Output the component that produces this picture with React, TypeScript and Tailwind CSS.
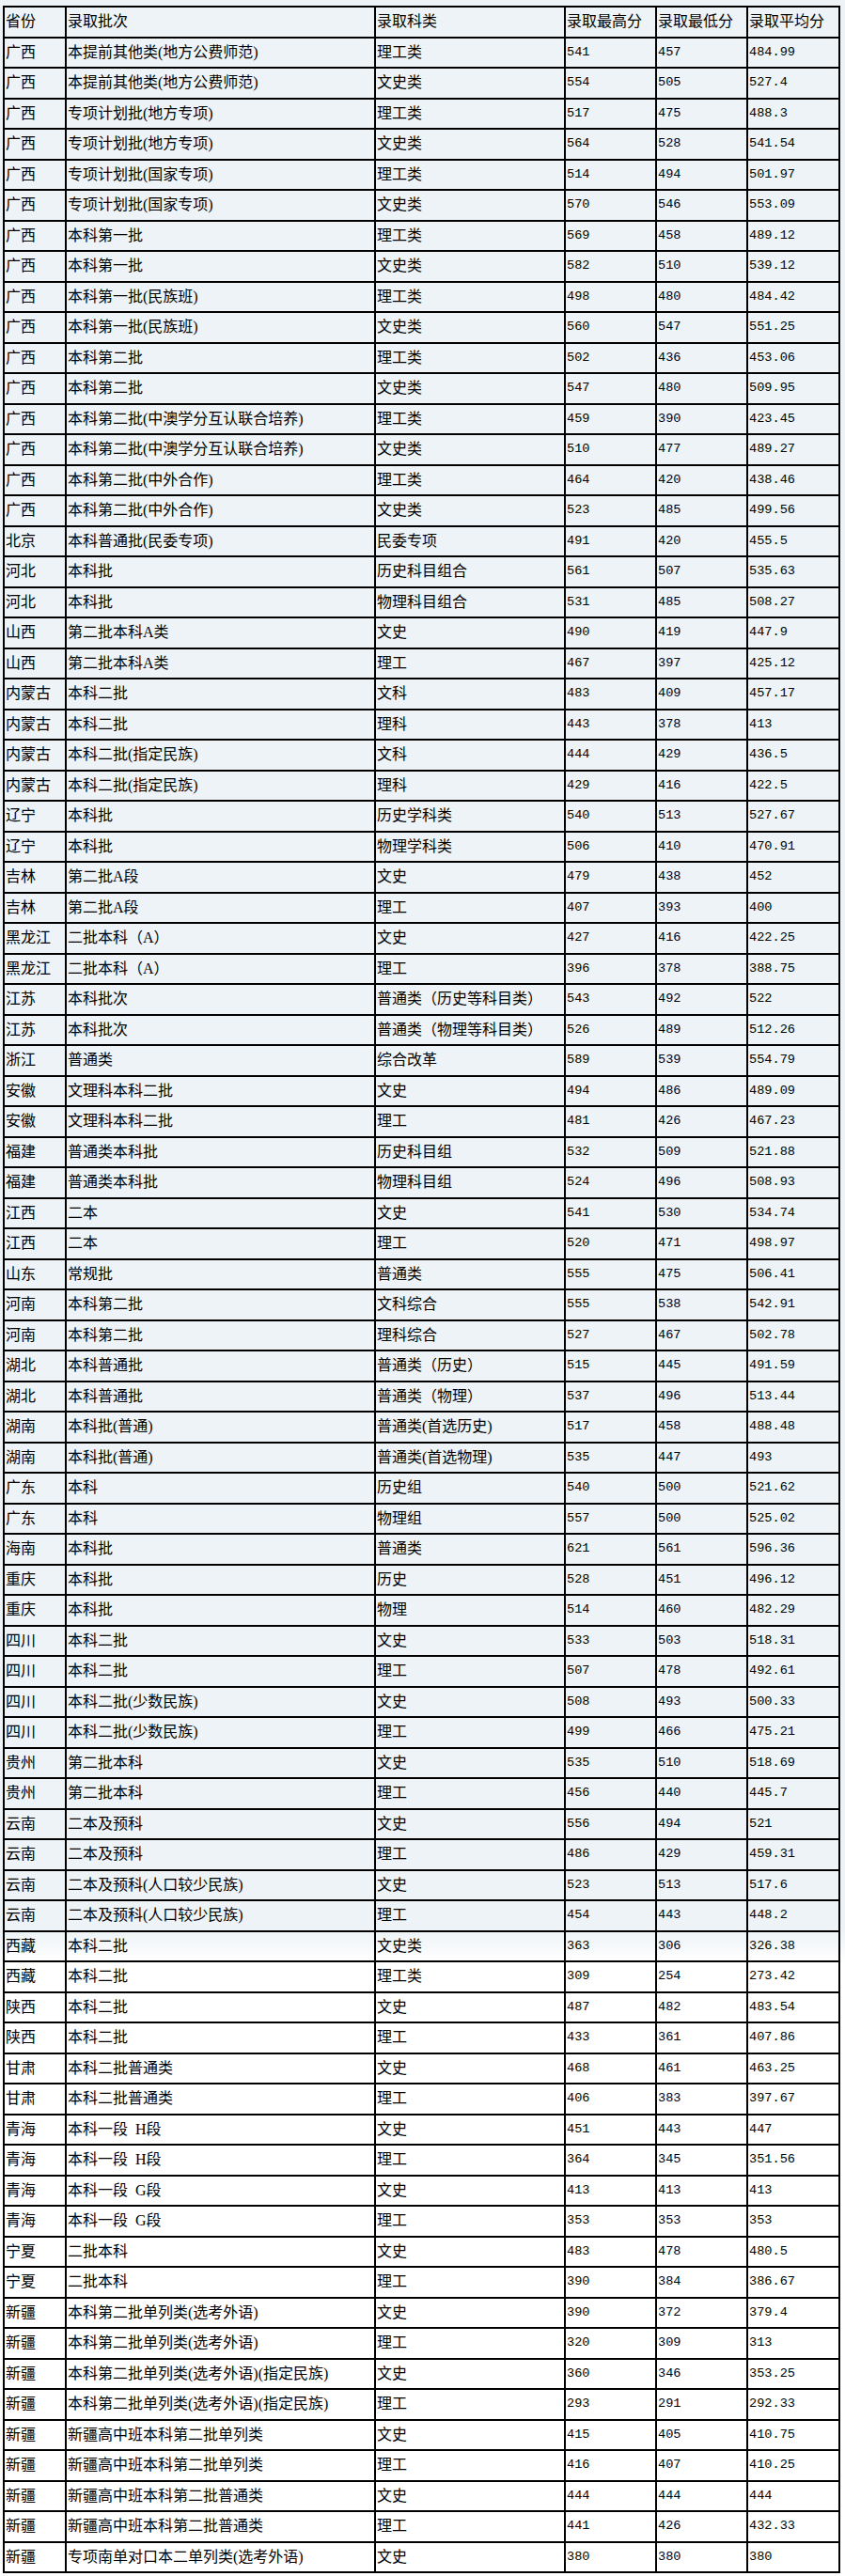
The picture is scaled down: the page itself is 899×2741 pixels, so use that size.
const rows: [string, string, string, string, string, string][] = [
  ['广西', '本提前其他类(地方公费师范)', '理工类', '541', '457', '484.99'],
  ['广西', '本提前其他类(地方公费师范)', '文史类', '554', '505', '527.4'],
  ['广西', '专项计划批(地方专项)', '理工类', '517', '475', '488.3'],
  ['广西', '专项计划批(地方专项)', '文史类', '564', '528', '541.54'],
  ['广西', '专项计划批(国家专项)', '理工类', '514', '494', '501.97'],
  ['广西', '专项计划批(国家专项)', '文史类', '570', '546', '553.09'],
  ['广西', '本科第一批', '理工类', '569', '458', '489.12'],
  ['广西', '本科第一批', '文史类', '582', '510', '539.12'],
  ['广西', '本科第一批(民族班)', '理工类', '498', '480', '484.42'],
  ['广西', '本科第一批(民族班)', '文史类', '560', '547', '551.25'],
  ['广西', '本科第二批', '理工类', '502', '436', '453.06'],
  ['广西', '本科第二批', '文史类', '547', '480', '509.95'],
  ['广西', '本科第二批(中澳学分互认联合培养)', '理工类', '459', '390', '423.45'],
  ['广西', '本科第二批(中澳学分互认联合培养)', '文史类', '510', '477', '489.27'],
  ['广西', '本科第二批(中外合作)', '理工类', '464', '420', '438.46'],
  ['广西', '本科第二批(中外合作)', '文史类', '523', '485', '499.56'],
  ['北京', '本科普通批(民委专项)', '民委专项', '491', '420', '455.5'],
  ['河北', '本科批', '历史科目组合', '561', '507', '535.63'],
  ['河北', '本科批', '物理科目组合', '531', '485', '508.27'],
  ['山西', '第二批本科A类', '文史', '490', '419', '447.9'],
  ['山西', '第二批本科A类', '理工', '467', '397', '425.12'],
  ['内蒙古', '本科二批', '文科', '483', '409', '457.17'],
  ['内蒙古', '本科二批', '理科', '443', '378', '413'],
  ['内蒙古', '本科二批(指定民族)', '文科', '444', '429', '436.5'],
  ['内蒙古', '本科二批(指定民族)', '理科', '429', '416', '422.5'],
  ['辽宁', '本科批', '历史学科类', '540', '513', '527.67'],
  ['辽宁', '本科批', '物理学科类', '506', '410', '470.91'],
  ['吉林', '第二批A段', '文史', '479', '438', '452'],
  ['吉林', '第二批A段', '理工', '407', '393', '400'],
  ['黑龙江', '二批本科（A）', '文史', '427', '416', '422.25'],
  ['黑龙江', '二批本科（A）', '理工', '396', '378', '388.75'],
  ['江苏', '本科批次', '普通类（历史等科目类）', '543', '492', '522'],
  ['江苏', '本科批次', '普通类（物理等科目类）', '526', '489', '512.26'],
  ['浙江', '普通类', '综合改革', '589', '539', '554.79'],
  ['安徽', '文理科本科二批', '文史', '494', '486', '489.09'],
  ['安徽', '文理科本科二批', '理工', '481', '426', '467.23'],
  ['福建', '普通类本科批', '历史科目组', '532', '509', '521.88'],
  ['福建', '普通类本科批', '物理科目组', '524', '496', '508.93'],
  ['江西', '二本', '文史', '541', '530', '534.74'],
  ['江西', '二本', '理工', '520', '471', '498.97'],
  ['山东', '常规批', '普通类', '555', '475', '506.41'],
  ['河南', '本科第二批', '文科综合', '555', '538', '542.91'],
  ['河南', '本科第二批', '理科综合', '527', '467', '502.78'],
  ['湖北', '本科普通批', '普通类（历史）', '515', '445', '491.59'],
  ['湖北', '本科普通批', '普通类（物理）', '537', '496', '513.44'],
  ['湖南', '本科批(普通)', '普通类(首选历史)', '517', '458', '488.48'],
  ['湖南', '本科批(普通)', '普通类(首选物理)', '535', '447', '493'],
  ['广东', '本科', '历史组', '540', '500', '521.62'],
  ['广东', '本科', '物理组', '557', '500', '525.02'],
  ['海南', '本科批', '普通类', '621', '561', '596.36'],
  ['重庆', '本科批', '历史', '528', '451', '496.12'],
  ['重庆', '本科批', '物理', '514', '460', '482.29'],
  ['四川', '本科二批', '文史', '533', '503', '518.31'],
  ['四川', '本科二批', '理工', '507', '478', '492.61'],
  ['四川', '本科二批(少数民族)', '文史', '508', '493', '500.33'],
  ['四川', '本科二批(少数民族)', '理工', '499', '466', '475.21'],
  ['贵州', '第二批本科', '文史', '535', '510', '518.69'],
  ['贵州', '第二批本科', '理工', '456', '440', '445.7'],
  ['云南', '二本及预科', '文史', '556', '494', '521'],
  ['云南', '二本及预科', '理工', '486', '429', '459.31'],
  ['云南', '二本及预科(人口较少民族)', '文史', '523', '513', '517.6'],
  ['云南', '二本及预科(人口较少民族)', '理工', '454', '443', '448.2'],
  ['西藏', '本科二批', '文史类', '363', '306', '326.38'],
  ['西藏', '本科二批', '理工类', '309', '254', '273.42'],
  ['陕西', '本科二批', '文史', '487', '482', '483.54'],
  ['陕西', '本科二批', '理工', '433', '361', '407.86'],
  ['甘肃', '本科二批普通类', '文史', '468', '461', '463.25'],
  ['甘肃', '本科二批普通类', '理工', '406', '383', '397.67'],
  ['青海', '本科一段  H段', '文史', '451', '443', '447'],
  ['青海', '本科一段  H段', '理工', '364', '345', '351.56'],
  ['青海', '本科一段  G段', '文史', '413', '413', '413'],
  ['青海', '本科一段  G段', '理工', '353', '353', '353'],
  ['宁夏', '二批本科', '文史', '483', '478', '480.5'],
  ['宁夏', '二批本科', '理工', '390', '384', '386.67'],
  ['新疆', '本科第二批单列类(选考外语)', '文史', '390', '372', '379.4'],
  ['新疆', '本科第二批单列类(选考外语)', '理工', '320', '309', '313'],
  ['新疆', '本科第二批单列类(选考外语)(指定民族)', '文史', '360', '346', '353.25'],
  ['新疆', '本科第二批单列类(选考外语)(指定民族)', '理工', '293', '291', '292.33'],
  ['新疆', '新疆高中班本科第二批单列类', '文史', '415', '405', '410.75'],
  ['新疆', '新疆高中班本科第二批单列类', '理工', '416', '407', '410.25'],
  ['新疆', '新疆高中班本科第二批普通类', '文史', '444', '444', '444'],
  ['新疆', '新疆高中班本科第二批普通类', '理工', '441', '426', '432.33'],
  ['新疆', '专项南单对口本二单列类(选考外语)', '文史', '380', '380', '380'],
];

const header = ['省份', '录取批次', '录取科类', '录取最高分', '录取最低分', '录取平均分'];

const cjk = "font-['Liberation_Serif','Noto_Sans_CJK_SC',sans-serif] text-[16px]";
const num = "font-['Liberation_Mono',monospace] text-[13.6px]";

function Row({ cells, isHeader }: { cells: string[]; isHeader?: boolean }) {
  return (
    <div className="grid h-[32.5px] grid-cols-[66px_329px_202px_97px_97px_98px]">
      {cells.map((c, i) => (
        <div
          key={i}
          className={`flex items-center overflow-hidden whitespace-pre border-r-2 border-b-2 border-black pl-[1px] leading-none text-black ${
            i >= 3 && !isHeader ? num : cjk
          }`}
        >
          {c}
        </div>
      ))}
    </div>
  );
}

export default function App() {
  return (
    <div className="min-h-[2741px] w-[899px] bg-[linear-gradient(to_bottom,#edf3f6_0px,#edf3f6_2054px,#ffffff_2088px)] pt-[6px] pb-[3px] pl-[3px]">
      <div className="w-[891px] border-t-2 border-l-2 border-black">
        <Row cells={header} isHeader />
        {rows.map((r, i) => (
          <Row key={i} cells={r} />
        ))}
      </div>
    </div>
  );
}
